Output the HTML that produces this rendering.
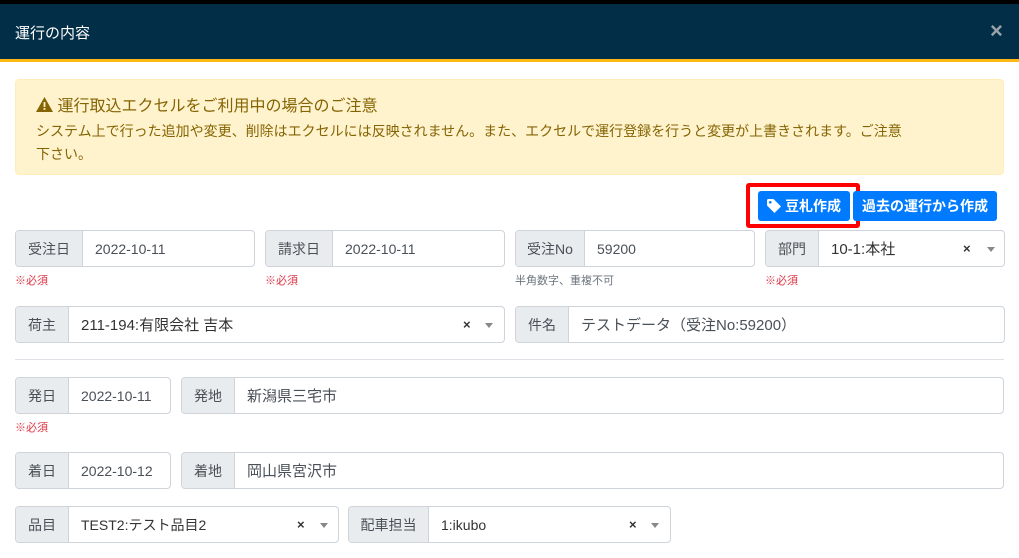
<!DOCTYPE html><html><head><meta charset="utf-8"><style>
*{box-sizing:border-box;margin:0;padding:0}
body{width:1019px;height:558px;overflow:hidden;background:#fff;font-family:"Liberation Sans","Noto Sans CJK JP",sans-serif;color:#495057;position:relative}
.a{position:absolute}
.g{position:absolute;height:37px;border:1px solid #ced4da;border-radius:4px;display:flex;overflow:hidden;background:#fff}
.g .l{background:#e9ecef;border-right:1px solid #ced4da;display:flex;align-items:center;justify-content:center;font-size:14px;color:#495057}
.g .v{display:flex;align-items:center;padding-left:12px;font-size:14px;color:#495057;flex:1;position:relative}
.x{position:absolute;font-size:13px;color:#333;font-weight:bold}
.c{position:absolute;width:0;height:0;border-left:4px solid transparent;border-right:4px solid transparent;border-top:5px solid #888}
.r{position:absolute;font-size:11px;color:#dc3545}
</style></head><body>
<div class="a" style="left:0;top:0;width:1019px;height:4px;background:#000"></div>
<div class="a" style="left:0;top:4px;width:1019px;height:55px;background:#022f47"></div>
<div class="a" style="left:0;top:59px;width:1019px;height:3px;background:#fcb814"></div>
<div class="a" style="left:15px;top:22px;font-size:15px;color:#fff">運行の内容</div>
<div class="a" style="left:990px;top:18px;font-size:22px;color:#9aa3aa;font-weight:bold">×</div>
<div class="a" style="left:15px;top:79px;width:989px;height:96px;background:#fff3cd;border:1px solid #ffeeba;border-radius:4px;color:#856404">
<div class="a" style="left:20px;top:12px;font-size:16px"><svg width="17" height="15" viewBox="0 0 17 15" style="vertical-align:-1px"><path d="M8.5 0L17 15H0z" fill="#856404"/><rect x="7.6" y="5" width="1.8" height="5" fill="#fff3cd"/><rect x="7.6" y="11" width="1.8" height="1.8" fill="#fff3cd"/></svg> 運行取込エクセルをご利用中の場合のご注意</div>
<div class="a" style="left:20px;top:40px;font-size:14px;line-height:23px;width:940px;white-space:nowrap">システム上で行った追加や変更、削除はエクセルには反映されません。また、エクセルで運行登録を行うと変更が上書きされます。ご注意<br>下さい。</div>
</div>
<div class="a" style="left:746px;top:183px;width:114px;height:45px;border:4px solid #f00;border-radius:3px"></div>
<div class="a" style="left:758px;top:191px;width:92px;height:30px;background:#007bff;border-radius:3px;color:#fff;font-size:14px;font-weight:bold;display:flex;align-items:center;justify-content:center"><svg width="14" height="14" viewBox="0 0 14 14" style="margin-right:4px"><path d="M0 1.5V6.5L7.5 14L14 7.5L6.5 0H1.5Q0 0 0 1.5Z" fill="#fff"/><circle cx="3.3" cy="3.3" r="1.3" fill="#007bff"/></svg>豆札作成</div>
<div class="a" style="left:853px;top:191px;width:144px;height:30px;background:#007bff;border-radius:3px;color:#fff;font-size:14px;font-weight:bold;display:flex;align-items:center;justify-content:center">過去の運行から作成</div>

<div class="g" style="left:15px;top:230px;width:240px"><div class="l" style="width:67px">受注日</div><div class="v">2022-10-11</div></div>
<div class="g" style="left:265px;top:230px;width:240px"><div class="l" style="width:67px">請求日</div><div class="v">2022-10-11</div></div>
<div class="g" style="left:515px;top:230px;width:240px"><div class="l" style="width:69px">受注No</div><div class="v">59200</div></div>
<div class="g" style="left:765px;top:230px;width:240px"><div class="l" style="width:53px">部門</div><div class="v" style="color:#333;font-size:15px">10-1:本社<span class="x" style="left:144px;top:10px">×</span><span class="c" style="left:168px;top:16px"></span></div></div>
<div class="r" style="left:15px;top:272px">※必須</div>
<div class="r" style="left:265px;top:272px">※必須</div>
<div class="r" style="left:515px;top:272px;color:#6c757d">半角数字、重複不可</div>
<div class="r" style="left:765px;top:272px">※必須</div>

<div class="g" style="left:15px;top:306px;width:490px"><div class="l" style="width:53px">荷主</div><div class="v" style="color:#333;font-size:15px">211-194:有限会社 吉本<span class="x" style="left:394px;top:10px">×</span><span class="c" style="left:416px;top:16px"></span></div></div>
<div class="g" style="left:515px;top:306px;width:490px"><div class="l" style="width:53px">件名</div><div class="v" style="font-size:15px">テストデータ（受注No:59200）</div></div>
<div class="a" style="left:15px;top:359px;width:989px;height:1px;background:#dee2e6"></div>

<div class="g" style="left:15px;top:377px;width:156px"><div class="l" style="width:53px">発日</div><div class="v">2022-10-11</div></div>
<div class="g" style="left:181px;top:377px;width:823px"><div class="l" style="width:53px">発地</div><div class="v" style="font-size:15px">新潟県三宅市</div></div>
<div class="r" style="left:15px;top:419px">※必須</div>
<div class="g" style="left:15px;top:452px;width:156px"><div class="l" style="width:53px">着日</div><div class="v">2022-10-12</div></div>
<div class="g" style="left:181px;top:452px;width:823px"><div class="l" style="width:53px">着地</div><div class="v" style="font-size:15px">岡山県宮沢市</div></div>
<div class="g" style="left:15px;top:506px;width:324px"><div class="l" style="width:53px">品目</div><div class="v" style="color:#333">TEST2:テスト品目2<span class="x" style="left:228px;top:10px">×</span><span class="c" style="left:251px;top:16px"></span></div></div>
<div class="g" style="left:348px;top:506px;width:323px"><div class="l" style="width:80px">配車担当</div><div class="v" style="color:#333">1:ikubo<span class="x" style="left:200px;top:10px">×</span><span class="c" style="left:222px;top:16px"></span></div></div>
</body></html>
